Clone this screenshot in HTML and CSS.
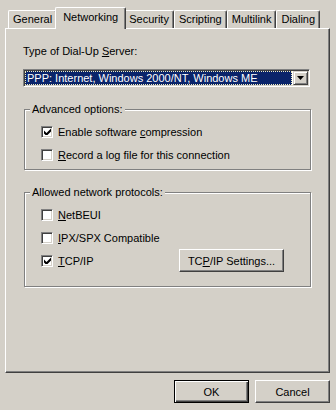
FILE: index.html
```html
<!DOCTYPE html>
<html lang="en">
<head>
    <meta charset="UTF-8">
    <title>Networking</title>
    <link rel="stylesheet" href="styles.css">
</head>
<body>

<div class="dialog">
    <div class="tabs">
        <div class="tab">General</div>
        <div class="tab active">Networking</div>
        <div class="tab">Security</div>
        <div class="tab">Scripting</div>
        <div class="tab">Multilink</div>
        <div class="tab">Dialing</div>
    </div>

    <div class="panel">
        <div class="label">Type of Dial-Up <u>S</u>erver:</div>

        <div class="combo">
            <div class="combo-value">PPP: Internet, Windows 2000/NT, Windows ME</div>
            <div class="combo-btn">
                <svg width="7" height="4" viewBox="0 0 7 4"><path d="M0 0h7L3.5 4z" fill="#000"/></svg>
            </div>
        </div>

        <fieldset class="group">
            <legend>Advanced options:</legend>
            <div class="check-row">
                <span class="check">
                    <svg width="7" height="7" viewBox="0 0 7 7"><path d="M0 2.5l2.5 2.5L7 0.5v3L2.5 8 0 5.5z" fill="#000"/></svg>
                </span>
                <span>Enable software <u>c</u>ompression</span>
            </div>
            <div class="check-row">
                <span class="check"></span>
                <span><u>R</u>ecord a log file for this connection</span>
            </div>
        </fieldset>

        <fieldset class="group protocols">
            <legend>Allowed network protocols:</legend>
            <div class="check-row">
                <span class="check"></span>
                <span><u>N</u>etBEUI</span>
            </div>
            <div class="check-row">
                <span class="check"></span>
                <span><u>I</u>PX/SPX Compatible</span>
            </div>
            <div class="check-row">
                <span class="check">
                    <svg width="7" height="7" viewBox="0 0 7 7"><path d="M0 2.5l2.5 2.5L7 0.5v3L2.5 8 0 5.5z" fill="#000"/></svg>
                </span>
                <span><u>T</u>CP/IP</span>
                <button class="btn settings-btn">TC<u>P</u>/IP Settings...</button>
            </div>
        </fieldset>
    </div>

    <div class="buttons">
        <button class="btn default">OK</button>
        <button class="btn">Cancel</button>
    </div>
</div>

</body>
</html>
```

FILE: styles.css
```css
* {
    box-sizing: border-box;
}

body {
    margin: 0;
    background-color: #d4d0c8;
    color: #000;
    font-family: 'Liberation Sans', Arial, sans-serif;
    font-size: 11px;
}

.tabs {
    display: flex;
    align-items: flex-end;
    height: 28px;
    padding-left: 8px;
}

.tab {
    height: 18px;
    line-height: 16px;
    padding: 0 4px;
    border-left: 1px solid #fff;
    border-top: 1px solid #fff;
    border-right: 1px solid #404040;
    border-radius: 2px 2px 0 0;
    box-shadow: inset -1px 0 #808080;
    background-color: #d4d0c8;
}

.tab.active {
    position: relative;
    z-index: 1;
    height: 22px;
    line-height: 18px;
    margin: 0 -2px -1px;
    padding: 0 7px;
}

.panel {
    height: 345px;
    margin: 0 6px 0 5px;
    padding: 16px 19px 0 17px;
    border-top: 1px solid #fff;
    border-left: 1px solid #fff;
    border-right: 1px solid #404040;
    border-bottom: 1px solid #404040;
    box-shadow: inset -1px -1px #808080;
}

.label {
    line-height: 13px;
}

u {
    text-decoration-thickness: 1px;
    text-underline-offset: 1px;
}

.combo {
    display: flex;
    height: 18px;
    margin-top: 11px;
    background-color: #fff;
    border: 1px solid;
    border-color: #808080 #fff #fff #808080;
    box-shadow: inset 1px 1px #404040, inset -1px -1px #d4d0c8;
    padding: 1px;
}

.combo-value {
    flex: 1;
    margin-right: 1px;
    padding-left: 1px;
    line-height: 12px;
    background-color: #0a246a;
    color: #fff;
    border: 1px dotted #f0eec0;
}

.combo-btn {
    width: 15px;
    display: flex;
    align-items: center;
    justify-content: center;
    background-color: #d4d0c8;
    border: 1px solid;
    border-color: #d4d0c8 #404040 #404040 #d4d0c8;
    box-shadow: inset 1px 1px #fff, inset -1px -1px #808080;
}

.group {
    margin: 16px -1px 0 1px;
    padding: 9px 0 8px;
    min-width: 0;
    border: 1px solid #808080;
    box-shadow: inset 1px 1px #fff, 1px 1px #fff;
}

.group legend {
    margin-left: 5px;
    padding: 0 2px;
    line-height: 13px;
    background-color: #d4d0c8;
}

.protocols {
    padding-bottom: 19px;
}

.check-row {
    display: flex;
    align-items: center;
    gap: 5px;
    height: 13px;
    margin: 0 26px 0 16px;
}

.check-row + .check-row {
    margin-top: 10px;
}

.check {
    width: 12px;
    height: 12px;
    display: flex;
    align-items: center;
    justify-content: center;
    background-color: #fff;
    border: 1px solid;
    border-color: #808080 #fff #fff #808080;
    box-shadow: inset 1px 1px #404040, inset -1px -1px #d4d0c8;
}

.btn {
    width: 75px;
    height: 23px;
    padding: 0;
    font-family: inherit;
    font-size: 11px;
    color: #000;
    background-color: #d4d0c8;
    border: 1px solid;
    border-color: #fff #404040 #404040 #fff;
    box-shadow: inset -1px -1px #808080;
}

.btn.default {
    border: 1px solid #000;
    box-shadow: inset 1px 1px #fff, inset -1px -1px #404040, inset -2px -2px #808080;
}

.settings-btn {
    width: 105px;
    margin: -5px 0 -5px auto;
}

.buttons {
    display: flex;
    justify-content: flex-end;
    gap: 6px;
    margin-top: 7px;
    padding-right: 6px;
}
```
